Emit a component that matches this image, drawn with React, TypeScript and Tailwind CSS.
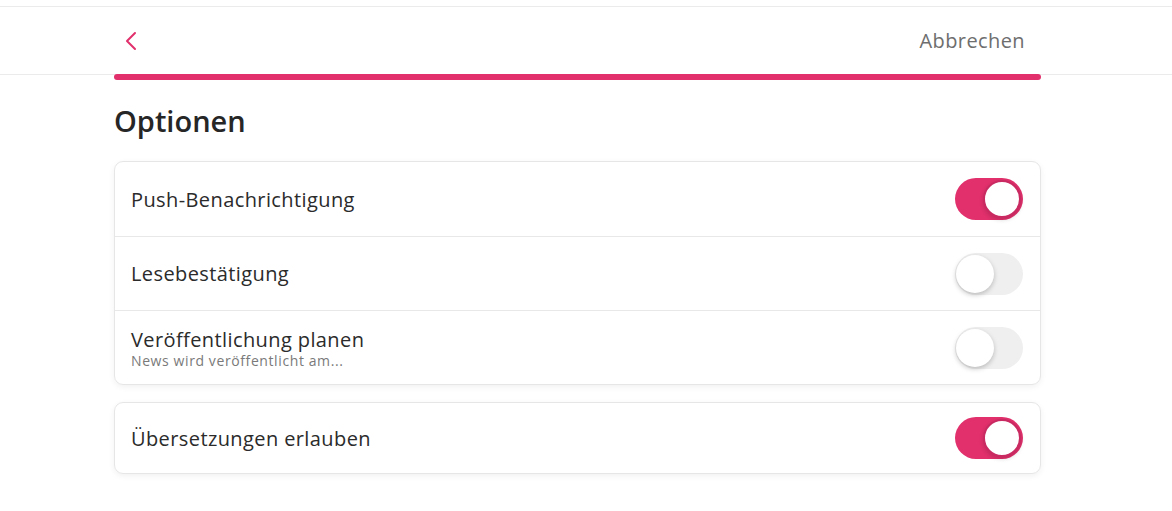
import React, { useState } from 'react';

const font = { fontFamily: '"Open Sans", Lato, sans-serif' };

interface ToggleProps {
  checked: boolean;
  onChange: (v: boolean) => void;
}

const Toggle: React.FC<ToggleProps> = ({ checked, onChange }) => (
  <button
    onClick={() => onChange(!checked)}
    className={`relative w-[68px] h-[42px] rounded-full shrink-0 transition-colors ${
      checked ? 'bg-[#e1306c]' : 'bg-[#efefef]'
    }`}
  >
    <span
      className={`absolute top-[2px] w-[38px] h-[38px] rounded-full bg-white transition-all ${
        checked
          ? 'left-[28px] border-2 border-[#c92a61] shadow-[0_2px_4px_rgba(0,0,0,0.15)]'
          : 'left-[1px] shadow-[0_2px_5px_rgba(0,0,0,0.22)]'
      }`}
    />
  </button>
);

interface RowProps {
  label: string;
  sub?: string;
  checked: boolean;
  onChange: (v: boolean) => void;
  border?: boolean;
  short?: boolean;
}

const Row: React.FC<RowProps> = ({ label, sub, checked, onChange, border, short }) => (
  <div
    className={`flex items-center justify-between pl-[16px] pr-[17px] ${short ? 'h-[70px]' : 'h-[74px]'} ${
      border ? 'border-t border-[#e8e8e8]' : ''
    }`}
  >
    <div className="flex flex-col">
      <span className="text-[20px] leading-[25px] tracking-[0.4px] text-[#2b2b2b]">{label}</span>
      {sub && (
        <span className="text-[14px] leading-[17px] tracking-[0.6px] text-[#7a7a7a]">{sub}</span>
      )}
    </div>
    <Toggle checked={checked} onChange={onChange} />
  </div>
);

export default function App() {
  const [push, setPush] = useState(true);
  const [read, setRead] = useState(false);
  const [plan, setPlan] = useState(false);
  const [translate, setTranslate] = useState(true);

  return (
    <div className="w-[1172px] h-[511px] bg-white overflow-hidden" style={font}>
      <div className="h-[6px]" />
      <header className="border-t border-b border-[#ebebeb] h-[69px] flex items-center justify-between pl-[122px] pr-[147px]">
        <button className="text-[#e1306c] mt-[1px]">
          <svg width="18" height="22" viewBox="0 0 18 22" fill="none">
            <path d="M13 3 L5 11 L13 19" stroke="currentColor" strokeWidth="2" strokeLinecap="round" strokeLinejoin="round" />
          </svg>
        </button>
        <button className="text-[20px] tracking-[0.4px] text-[#6e6e6e] mt-[1px]">Abbrechen</button>
      </header>
      <div className="px-[114px] w-[1155px]">
        <div className="h-[6px] -mt-[1px] rounded-full bg-[#e1306c]" />
        <h1 className="mt-[21px] text-[29px] leading-[40px] font-semibold text-[#262626]">Optionen</h1>
        <div className="mt-[20px] rounded-[9px] border border-[#e6e6e6] shadow-[0_2px_6px_rgba(0,0,0,0.06)]">
          <Row label="Push-Benachrichtigung" checked={push} onChange={setPush} />
          <Row label="Lesebestätigung" checked={read} onChange={setRead} border />
          <Row
            label="Veröffentlichung planen"
            sub="News wird veröffentlicht am..."
            checked={plan}
            onChange={setPlan}
            border
          />
        </div>
        <div className="mt-[17px] rounded-[9px] border border-[#e6e6e6] shadow-[0_2px_6px_rgba(0,0,0,0.06)]">
          <Row label="Übersetzungen erlauben" checked={translate} onChange={setTranslate} short />
        </div>
      </div>
    </div>
  );
}
